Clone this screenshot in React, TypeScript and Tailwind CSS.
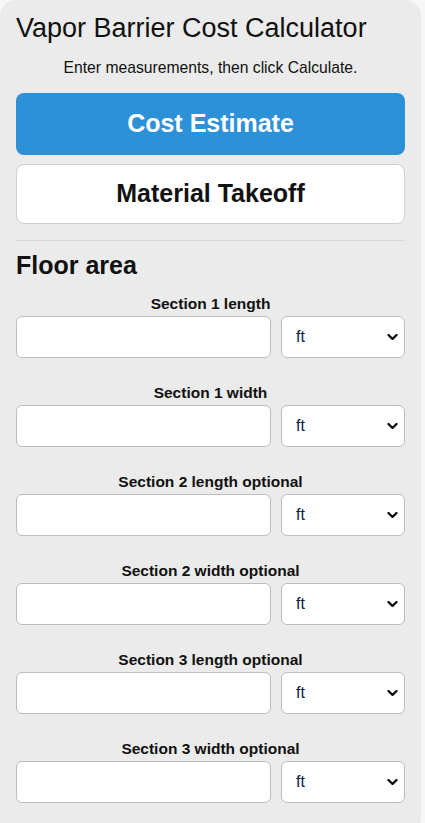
import { useState } from "react";

const SECTIONS = [
  "Section 1 length",
  "Section 1 width",
  "Section 2 length optional",
  "Section 2 width optional",
  "Section 3 length optional",
  "Section 3 width optional",
];

function MeasureRow({ label }: { label: string }) {
  return (
    <div className="flex flex-col">
      <label className="text-center text-[15.5px] font-bold leading-[20px] text-[#111]">
        {label}
      </label>
      <div className="mt-[2px] flex gap-[10px]">
        <input
          type="text"
          className="h-[42px] min-w-0 flex-1 rounded-[6px] border border-[#bdbdbd] bg-white px-3 text-[16px] outline-none"
        />
        <div className="relative w-[124px]">
          <select className="h-[42px] w-full appearance-none rounded-[6px] border border-[#bdbdbd] bg-white pl-[14px] text-[16px] text-[#0d1b3e] outline-none">
            <option>ft</option>
            <option>in</option>
            <option>yd</option>
            <option>m</option>
            <option>cm</option>
          </select>
          <svg
            className="pointer-events-none absolute right-[7px] top-1/2 -translate-y-1/2"
            width="11"
            height="7"
            viewBox="0 0 11 7"
          >
            <path
              d="M1.5 1.5 L5.5 5.5 L9.5 1.5"
              fill="none"
              stroke="#111"
              strokeWidth="2.4"
              strokeLinecap="round"
              strokeLinejoin="round"
            />
          </svg>
        </div>
      </div>
    </div>
  );
}

export default function App() {
  const [tab, setTab] = useState<"cost" | "takeoff">("cost");

  return (
    <div className="min-h-screen bg-[#f7f7f7] font-['Liberation_Sans',Arial,sans-serif]">
      <div className="w-[421px] rounded-[16px] bg-[#eaebea] px-4 pb-8 pt-[12px]">
        <h1 className="text-[27px] leading-[32px] text-[#111]">
          Vapor Barrier Cost Calculator
        </h1>
        <p className="mt-[14px] text-center text-[15.7px] leading-[19px] text-[#111]">
          Enter measurements, then click Calculate.
        </p>
        <div className="mt-[16px] flex flex-col gap-[9px]">
          <button
            type="button"
            onClick={() => setTab("cost")}
            className={`h-[62px] rounded-[8px] text-[25px] font-bold ${
              tab === "cost"
                ? "bg-[#2d91d8] text-white"
                : "border border-[#cfcfcf] bg-white text-[#111]"
            }`}
          >
            Cost Estimate
          </button>
          <button
            type="button"
            onClick={() => setTab("takeoff")}
            className={`h-[60px] rounded-[8px] text-[25px] font-bold ${
              tab === "takeoff"
                ? "bg-[#2d91d8] text-white"
                : "border border-[#cfcfcf] bg-white text-[#111]"
            }`}
          >
            Material Takeoff
          </button>
        </div>
        <hr className="mt-[16px] border-t border-[#d6d6d6]" />
        <h2 className="mt-[9px] text-[25px] font-bold leading-[30px] text-[#111]">
          Floor area
        </h2>
        <div className="mt-[14px] flex flex-col gap-[25px]">
          {SECTIONS.map((s) => (
            <MeasureRow key={s} label={s} />
          ))}
        </div>
      </div>
    </div>
  );
}
